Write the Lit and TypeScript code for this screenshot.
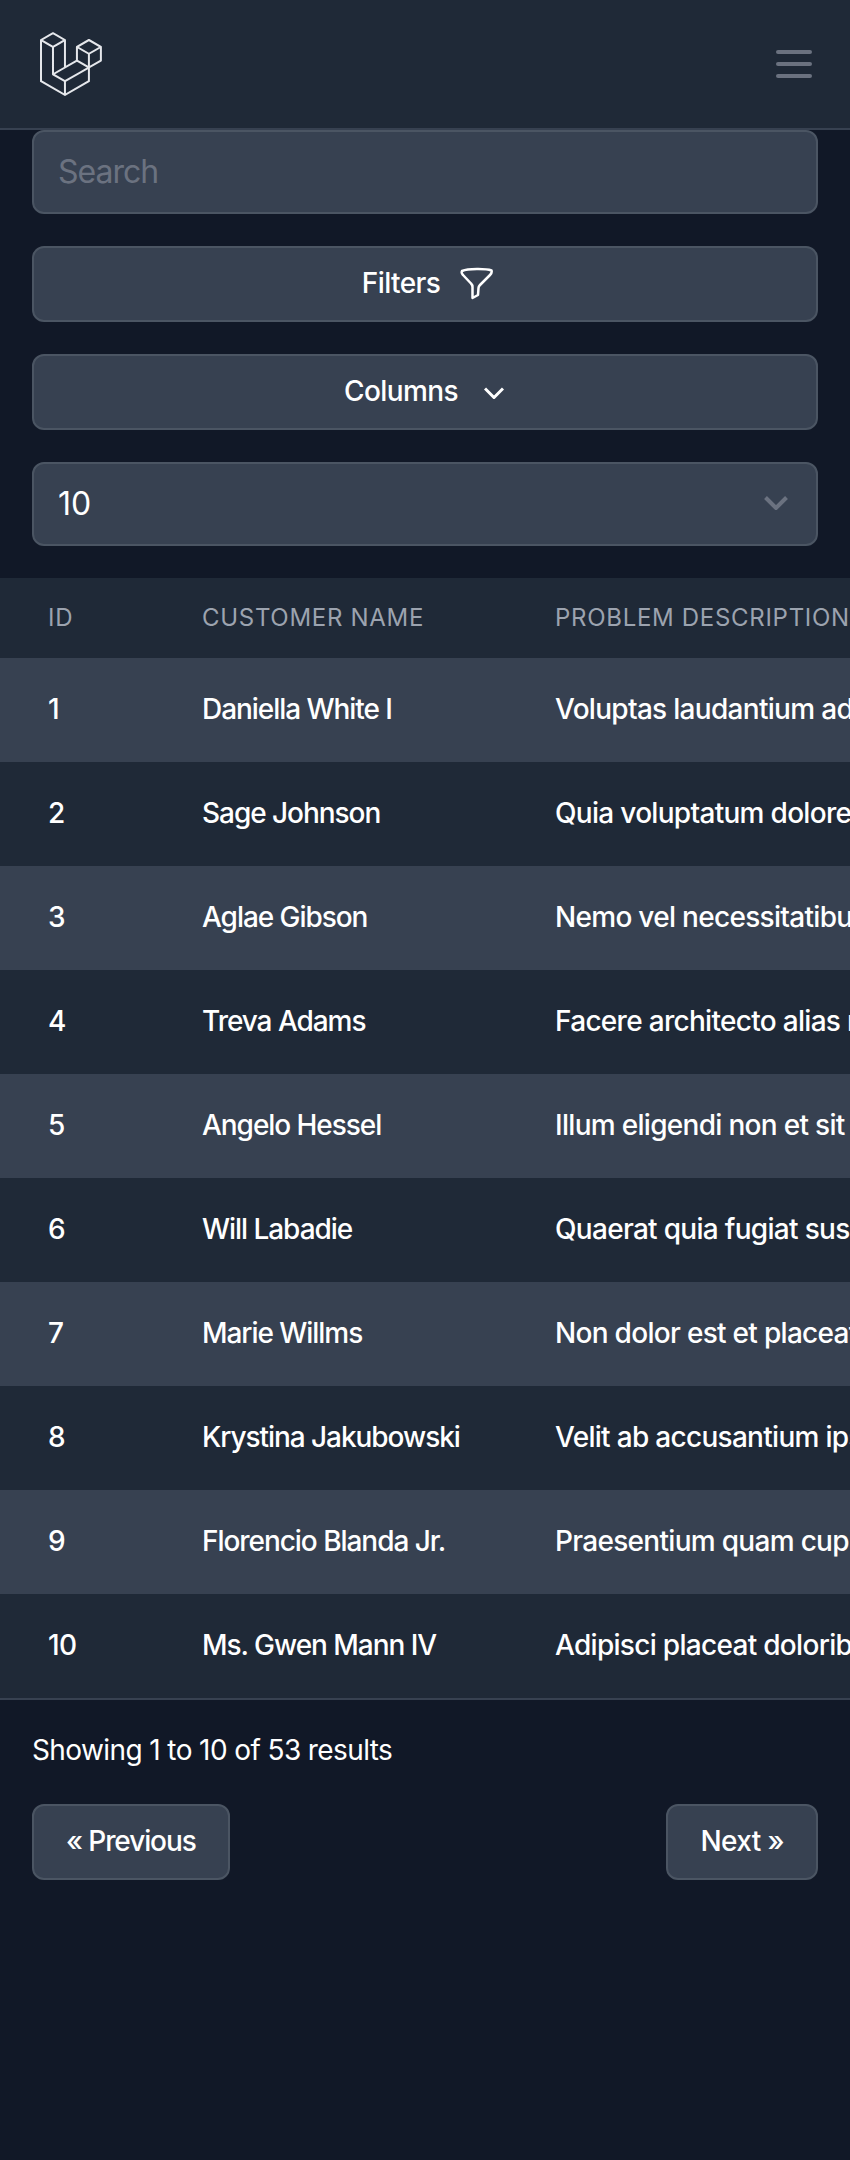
import { LitElement, html, css, svg } from 'lit';
import { customElement } from 'lit/decorators.js';

const LOGO = 'M61.8548 14.6253C61.8778 14.7102 61.8895 14.7978 61.8897 14.8858V28.5615C61.8898 28.737 61.8434 28.9095 61.7554 29.0614C61.6675 29.2132 61.5409 29.3392 61.3887 29.4265L49.9104 36.0351V49.1337C49.9104 49.4902 49.7209 49.8192 49.4118 49.9987L25.4519 63.7916C25.3971 63.8227 25.3372 63.8427 25.2774 63.8639C25.255 63.8714 25.2338 63.8851 25.2101 63.8913C25.0426 63.9354 24.8666 63.9354 24.6991 63.8913C24.6716 63.8838 24.6467 63.8689 24.6205 63.8589C24.5657 63.8389 24.5084 63.8215 24.456 63.7916L0.501061 49.9987C0.348882 49.9113 0.222437 49.7853 0.134469 49.6334C0.0465019 49.4816 0.000120578 49.3092 0 49.1337L0 8.10652C0 8.01678 0.0124642 7.92953 0.0348998 7.84477C0.0423783 7.8161 0.0598282 7.78993 0.0697995 7.76126C0.0884958 7.70891 0.105946 7.65531 0.133367 7.6067C0.152063 7.5743 0.179485 7.54812 0.20192 7.51821C0.230588 7.47832 0.256763 7.43719 0.290416 7.40229C0.319084 7.37362 0.356476 7.35243 0.388883 7.32751C0.425029 7.29759 0.457436 7.26518 0.498568 7.2415L12.4779 0.345059C12.6296 0.257786 12.8015 0.211853 12.9765 0.211853C13.1515 0.211853 13.3234 0.257786 13.475 0.345059L25.4531 7.2415H25.4556C25.4955 7.26643 25.5292 7.29759 25.5653 7.32626C25.5977 7.35119 25.6339 7.37362 25.6625 7.40104C25.6974 7.43719 25.7224 7.47832 25.7523 7.51821C25.7735 7.54812 25.8021 7.5743 25.8196 7.6067C25.8483 7.65656 25.8645 7.70891 25.8844 7.76126C25.8944 7.78993 25.9118 7.8161 25.9193 7.84602C25.9423 7.93096 25.954 8.01853 25.9542 8.10652V33.7317L35.9355 27.9844V14.8846C35.9355 14.7973 35.948 14.7088 35.9704 14.6253C35.9792 14.5954 35.9954 14.5692 36.0053 14.5405C36.0253 14.4882 36.0427 14.4346 36.0702 14.386C36.0888 14.3536 36.1163 14.3274 36.1375 14.2975C36.1674 14.2576 36.1923 14.2165 36.2272 14.1816C36.2559 14.1529 36.292 14.1317 36.3244 14.1068C36.3618 14.0769 36.3942 14.0445 36.4341 14.0208L48.4147 7.12434C48.5663 7.03694 48.7383 6.99094 48.9133 6.99094C49.0883 6.99094 49.2602 7.03694 49.4118 7.12434L61.3899 14.0208C61.4323 14.0457 61.4647 14.0769 61.5021 14.1055C61.5333 14.1305 61.5694 14.1529 61.5981 14.1803C61.633 14.2165 61.6579 14.2576 61.6878 14.2975C61.7103 14.3274 61.7377 14.3536 61.7551 14.386C61.7838 14.4346 61.8 14.4882 61.8199 14.5405C61.8312 14.5692 61.8474 14.5954 61.8548 14.6253ZM59.893 27.9844V16.6121L55.7013 19.0252L49.9104 22.3593V33.7317L59.8942 27.9844H59.893ZM47.9149 48.5566V37.1768L42.2187 40.4299L25.953 49.7133V61.2003L47.9149 48.5566ZM1.99677 9.83281V48.5566L23.9562 61.199V49.7145L12.4841 43.2219L12.4804 43.2194L12.4754 43.2169C12.4368 43.1945 12.4044 43.1621 12.3682 43.1347C12.3371 43.1097 12.3009 43.0898 12.2735 43.0624L12.271 43.0586C12.2386 43.0275 12.2162 42.9888 12.1887 42.9539C12.1638 42.9203 12.1339 42.8916 12.114 42.8567L12.1127 42.853C12.0903 42.8156 12.0766 42.7707 12.0604 42.7283C12.0442 42.6909 12.023 42.656 12.013 42.6161C12.0005 42.5688 11.998 42.5177 11.9931 42.4691C11.9881 42.4317 11.9781 42.3943 11.9781 42.3569V15.5801L6.18848 12.2446L1.99677 9.83281ZM12.9777 2.36177L2.99764 8.10652L12.9752 13.8513L22.9541 8.10527L12.9752 2.36177H12.9777ZM18.1678 38.2138L23.9574 34.8809V9.83281L19.7657 12.2459L13.9749 15.5801V40.6281L18.1678 38.2138ZM48.9133 9.14105L38.9344 14.8858L48.9133 20.6305L58.8909 14.8846L48.9133 9.14105ZM47.9149 22.3593L42.124 19.0252L37.9323 16.6121V27.9844L43.7219 31.3174L47.9149 33.7317V22.3593ZM24.9533 47.987L39.59 39.631L46.9065 35.4555L36.9352 29.7145L25.4544 36.3242L14.9907 42.3482L24.9533 47.987Z';

const ROWS = [
  ['1', 'Daniella White I', 'Voluptas laudantium ad quia et sint'],
  ['2', 'Sage Johnson', 'Quia voluptatum dolore et quo minima'],
  ['3', 'Aglae Gibson', 'Nemo vel necessitatibus eum ut'],
  ['4', 'Treva Adams', 'Facere architecto alias rem nisi quia'],
  ['5', 'Angelo Hessel', 'Illum eligendi non et sit quis magnam'],
  ['6', 'Will Labadie', 'Quaerat quia fugiat suscipit a sed'],
  ['7', 'Marie Willms', 'Non dolor est et placeat quo aut'],
  ['8', 'Krystina Jakubowski', 'Velit ab accusantium ipsa est ut'],
  ['9', 'Florencio Blanda Jr.', 'Praesentium quam cupiditate et sed'],
  ['10', 'Ms. Gwen Mann IV', 'Adipisci placeat doloribus quia non'],
];

@customElement('app-root')
export class AppRoot extends LitElement {
  static styles = css`
    :host {
      display: block;
      min-height: 2160px;
      background: #111827;
      color: #fff;
      font-family: Inter, 'Liberation Sans', sans-serif;
      font-size: 28px;
      letter-spacing: -0.6px;
    }

    .nav {
      display: flex;
      justify-content: space-between;
      align-items: center;
      height: 128px;
      padding: 0 38px 0 40px;
      background: #1f2937;
      border-bottom: 2px solid #374151;
    }

    .logo {
      display: block;
      width: 62px;
      height: 65px;
      fill: #e5e7eb;
    }

    .menu {
      display: block;
      width: 36px;
      height: 28px;
      stroke: #6b7280;
      stroke-width: 4;
      stroke-linecap: round;
    }

    .filters {
      display: flex;
      flex-direction: column;
      gap: 32px;
      padding: 0 32px 32px;
    }

    .field,
    .btn {
      display: flex;
      align-items: center;
      box-sizing: border-box;
      background: #374151;
      border: 2px solid #4b5563;
      border-radius: 12px;
    }

    .field {
      height: 84px;
      padding: 0 24px 2px;
      font-size: 32px;
    }

    .search {
      color: #6b7280;
      letter-spacing: -1px;
    }

    .select {
      justify-content: space-between;
      padding-right: 28px;
      letter-spacing: 0;
    }

    .btn {
      justify-content: center;
      height: 76px;
      padding: 0 32px 2px;
      font-weight: 500;
    }

    .btn svg {
      display: block;
      fill: none;
    }

    .funnel {
      width: 34px;
      height: 33px;
      margin: 1px -6px 0 20px;
      stroke: #fff;
      stroke-width: 2.5;
      stroke-linejoin: round;
    }

    .chevron {
      width: 20px;
      height: 12px;
      margin: 4px 2px 0 26px;
      stroke: #fff;
      stroke-width: 3;
    }

    .select svg {
      display: block;
      width: 24px;
      height: 14px;
      fill: none;
      stroke: #6b7280;
      stroke-width: 4;
    }

    .table-wrap {
      overflow: hidden;
      border-bottom: 2px solid #374151;
    }

    .row {
      display: grid;
      grid-template-columns: 154px 353px 1fr;
      align-items: center;
      box-sizing: border-box;
      height: 104px;
      padding: 0 0 2px 48px;
      white-space: nowrap;
      background: #1f2937;
      font-weight: 500;
    }

    .row.odd {
      background: #374151;
    }

    .row.head {
      height: 80px;
      background: #1f2937;
      color: #9ca3af;
      font-size: 24px;
      font-weight: 400;
      letter-spacing: 0.7px;
      text-transform: uppercase;
    }

    .name {
      letter-spacing: -1.05px;
    }

    .desc {
      letter-spacing: -0.7px;
    }

    .footer {
      display: flex;
      flex-direction: column;
      gap: 32px;
      padding: 30px 32px 32px;
    }

    .summary {
      line-height: 40px;
      padding-bottom: 2px;
    }

    .pager {
      display: flex;
      justify-content: space-between;
    }

    .prev {
      letter-spacing: -1.1px;
    }
  `;

  render() {
    return html`
      <nav class="nav">
        <svg class="logo" viewBox="0 0 62 65"><path d=${LOGO}></path></svg>
        <svg class="menu" viewBox="0 0 36 28">
          ${[2, 14, 26].map((y) => svg`<line x1="2" x2="34" y1=${y} y2=${y}></line>`)}
        </svg>
      </nav>
      <section class="filters">
        <div class="field search">Search</div>
        <div class="btn">
          Filters
          <svg class="funnel" viewBox="0 0 34 33">
            <path d="M2 4C8 1.5 26 1.5 31.5 3.5C32 5 31.5 6.5 30 8L20 18C19 19 18.5 20 18.5 21L18 28L12.5 31V20C12.5 18.5 12 17.5 11 16.5L3 8C1.5 6.5 1.5 5 2 4Z"></path>
          </svg>
        </div>
        <div class="btn">
          Columns
          <svg class="chevron" viewBox="0 0 20 12"><path d="M1 1.5L10 10.5L19 1.5"></path></svg>
        </div>
        <div class="field select">
          10
          <svg viewBox="0 0 24 14"><path d="M1.5 1.5L12 12L22.5 1.5"></path></svg>
        </div>
      </section>
      <div class="table-wrap">
        <div class="row head">
          <span>ID</span><span>Customer name</span><span>Problem description</span>
        </div>
        ${ROWS.map(
          (r, i) => html`
            <div class="row ${i % 2 === 0 ? 'odd' : ''}">
              <span>${r[0]}</span><span class="name">${r[1]}</span><span class="desc">${r[2]}</span>
            </div>
          `,
        )}
      </div>
      <section class="footer">
        <div class="summary">Showing 1 to 10 of 53 results</div>
        <div class="pager">
          <div class="btn prev">« Previous</div>
          <div class="btn">Next »</div>
        </div>
      </section>
    `;
  }
}
